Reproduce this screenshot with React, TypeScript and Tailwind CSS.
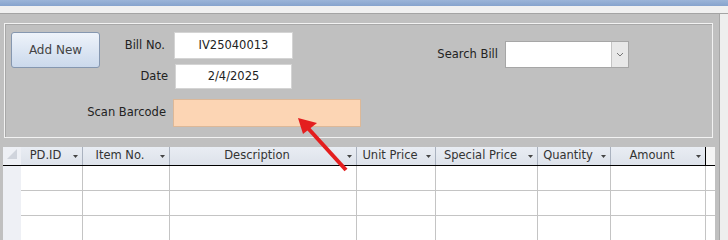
import React from 'react';

const columns = [
  { label: 'PD.ID', w: 'w-[62px]' },
  { label: 'Item No.', w: 'w-[87px]' },
  { label: 'Description', w: 'w-[187px]' },
  { label: 'Unit Price', w: 'w-[79px]' },
  { label: 'Special Price', w: 'w-[102px]' },
  { label: 'Quantity', w: 'w-[73px]' },
  { label: 'Amount', w: 'w-[95px]' },
];

const SortArrow = () => (
  <svg width="12" height="6" viewBox="0 0 12 6" className="shrink-0">
    <path d="M3 2h5l-2.5 3z" fill="#444" />
  </svg>
);

const Row = () => (
  <div className="flex h-[25px]">
    <div className="w-[18px] bg-[#eef0f5]" />
    {columns.map((c) => (
      <div key={c.label} className={`${c.w} bg-white border-r border-b border-[#c4c4c4]`} />
    ))}
    <div className="flex-1 bg-white border-b border-[#c4c4c4]" />
  </div>
);

export default function App() {
  return (
    <div className="relative w-[728px] h-[240px] overflow-hidden bg-[#c0c0c0] font-['DejaVu_Sans',sans-serif] text-[11.5px] text-[#222]">
      <div className="h-[6px] bg-gradient-to-b from-[#9bb4d8] to-[#86a3cd]" />
      <div className="h-[7px] bg-[#f0f0f0]" />
      <div className="h-px bg-[#a4a4a4]" />

      <div className="flex h-[226px]">
        <div className="w-[719px] pt-[9px]">
          {/* header panel */}
          <div className="ml-[4px] w-[709px] h-[115px] border border-[#f2f2f2] shadow-[inset_1px_1px_0_#a8a8a8] flex items-start pt-[8px] pl-[6px]">
            <div className="grid grid-cols-[89px_74px_auto] grid-rows-[27px_30px_38px] items-end">
              <button className="row-span-2 self-start h-[36px] rounded-[3px] border border-[#8597b0] bg-gradient-to-b from-[#eef3fa] to-[#cbd9ec] text-[12px] text-[#444]">
                Add New
              </button>
              <div className="h-[27px] flex items-center justify-end pr-[9px]">Bill No.</div>
              <div className="h-[27px] w-[119px] bg-white border border-[#d4d4d4] flex items-center justify-center">IV25040013</div>

              <div className="h-[25px] flex items-center justify-end pr-[6px]">Date</div>
              <div className="h-[25px] w-[117px] ml-[1px] bg-white border border-[#d4d4d4] flex items-center justify-center">2/4/2025</div>

              <div className="col-span-2 h-[28px] flex items-center justify-end pr-[8px]">Scan Barcode</div>
              <div className="h-[28px] w-[188px] -ml-[1px] bg-[#fcd5b4] border border-[#dcb898]" />
            </div>

            <div className="ml-[72px] mt-[9px] flex items-center gap-[7px]">
              <div className="w-[65px] text-right">Search Bill</div>
              <div className="w-[124px] h-[27px] flex bg-white border border-[#a6a6a6]">
                <div className="flex-1" />
                <div className="w-[17px] bg-[#e8e8e8] border-l border-[#c4c4c4] flex items-center justify-center">
                  <svg width="8" height="5" viewBox="0 0 8 5">
                    <path d="M1 1l3 3 3-3" fill="none" stroke="#777" strokeWidth="1" />
                  </svg>
                </div>
              </div>
            </div>
          </div>

          {/* datasheet */}
          <div className="mt-[9px] ml-[3px] w-[712px]">
            <div className="flex h-[19px] border-b border-black bg-[#f4f4f4]">
              <div className="w-[18px] bg-[#eef0f5] flex items-start pl-[4px] pt-[2px]">
                <svg width="10" height="10" viewBox="0 0 10 10">
                  <path d="M10 0v10H0z" fill="#d0d4dc" />
                </svg>
              </div>
              {columns.map((c, i) => (
                <div
                  key={c.label}
                  className={`${c.w} flex items-center bg-gradient-to-b from-[#e9edf3] to-[#dde2ea] border-r ${i === columns.length - 1 ? 'border-black' : 'border-[#aab2bf]'} text-[#333]`}
                >
                  <span className="flex-1 text-center whitespace-nowrap">{c.label}</span>
                  <SortArrow />
                </div>
              ))}
              <div className="flex-1" />
            </div>
            <Row />
            <Row />
            <Row />
          </div>
        </div>
        <div className="flex-1 bg-[#eeeeee] border-l border-[#a8a8a8]" />
      </div>

      <svg className="absolute left-0 top-0 pointer-events-none" width="728" height="240" viewBox="0 0 728 240">
        <line x1="346" y1="170" x2="306" y2="126" stroke="#e41e1e" strokeWidth="4" />
        <path d="M298 118L317 123L303 134Z" fill="#e41e1e" />
      </svg>
    </div>
  );
}
